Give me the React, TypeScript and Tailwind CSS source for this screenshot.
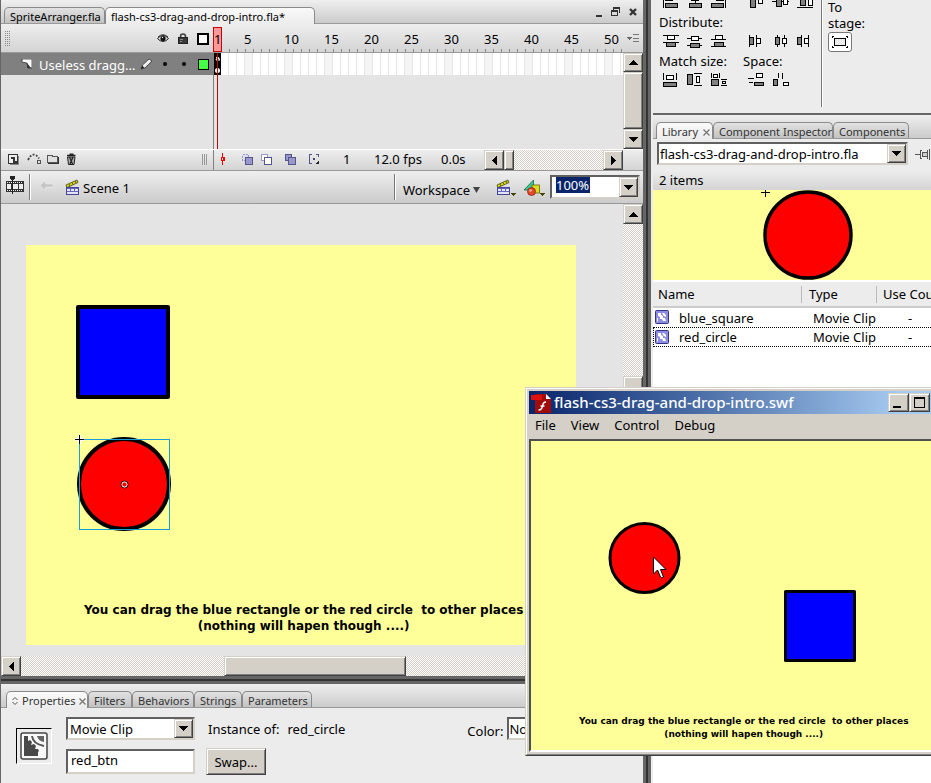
import type { ReactNode } from "react";
import { clsx } from "clsx";

const GRADIENT = "bg-linear-to-b from-[#efefef] to-[#cbcbcb]";
const BAR = "bg-linear-to-b from-[#eeeeee] to-[#d4d4d4]";
const DITHER =
  "bg-[repeating-conic-gradient(#ffffff_0_25%,#d4d0c8_0_50%)] bg-[length:2px_2px]";
const RAISED =
  "border border-t-[#d4d0c8] border-l-[#d4d0c8] border-r-[#404040] border-b-[#404040] bg-[#d4d0c8] shadow-[inset_1px_1px_#ffffff,inset_-1px_-1px_#808080]";
const SUNKEN =
  "border-2 border-t-[#606060] border-l-[#606060] border-r-[#d4d0c8] border-b-[#d4d0c8] bg-white";

type Direction = "up" | "down" | "left" | "right";

const ARROWS: Record<Direction, string> = {
  up: "M4 0h1v1h1v1h1v1h1v1h1v1H0V4h1V3h1V2h1V1h1z",
  down: "M0 0h9v1H8v1H7v1H6v1H5v1H4V4H3V3H2V2H1V1H0z",
  left: "M4 0h1v9H4V8H3V7H2V6H1V5H0V4h1V3h1V2h1V1h1z",
  right: "M0 0h1v1h1v1h1v1h1v1h1v1H4v1H3v1H2v1H1v1H0z",
};

function Glyph({
  w,
  h,
  children,
  smooth,
}: {
  w: number;
  h: number;
  children: ReactNode;
  smooth?: boolean;
}) {
  return (
    <svg
      width={w}
      height={h}
      viewBox={`0 0 ${w} ${h}`}
      fill="none"
      shapeRendering={smooth ? "auto" : "crispEdges"}
      className="shrink-0"
      aria-hidden="true"
    >
      {children}
    </svg>
  );
}

function ArrowButton({
  direction,
  label,
  className,
}: {
  direction: Direction;
  label: string;
  className?: string;
}) {
  const upright = direction === "up" || direction === "down";
  return (
    <button
      aria-label={label}
      className={clsx(
        "flex shrink-0 items-center justify-center",
        RAISED,
        className ?? "size-5",
      )}
    >
      <Glyph w={upright ? 9 : 5} h={upright ? 5 : 9}>
        <path d={ARROWS[direction]} fill="#000" />
      </Glyph>
    </button>
  );
}

function Tab({
  children,
  active,
  className,
}: {
  children: ReactNode;
  active?: boolean;
  className?: string;
}) {
  return (
    <button
      className={clsx(
        "flex shrink-0 items-center rounded-t-[5px] border border-b-0 border-[#8a8a8a] pt-[2px] text-[11px] leading-[14px] whitespace-nowrap",
        active
          ? "-mb-px h-[17px] bg-linear-to-b from-[#fafafa] to-[#ececec]"
          : "h-4 bg-linear-to-b from-[#e2e2e2] to-[#c2c2c2]",
        className,
      )}
    >
      {children}
    </button>
  );
}

function CloseMark() {
  return (
    <Glyph w={7} h={7} smooth>
      <path d="M0.5 0.5l6 6M6.5 0.5l-6 6" stroke="#777" strokeWidth="1.3" />
    </Glyph>
  );
}

/* ---------- document tabs ---------- */

function DocumentTabs() {
  return (
    <div
      className={clsx(
        "flex h-6 shrink-0 items-end border-b border-[#999] pl-[3px]",
        GRADIENT,
      )}
    >
      <Tab className="w-[101px] pl-[5px]">SpriteArranger.fla</Tab>
      <Tab active className="w-[210px] pl-[5px]">
        flash-cs3-drag-and-drop-intro.fla*
      </Tab>
      <div className="flex flex-1 items-center justify-end gap-[9px] self-stretch pr-[6px]">
        <button aria-label="Minimize document" className="pt-2">
          <Glyph w={6} h={2}>
            <path d="M0 0h6v2H0z" fill="#333" />
          </Glyph>
        </button>
        <button aria-label="Restore document">
          <Glyph w={9} h={9}>
            <path
              d="M2 0h7v6H8V2H3v1H2zM0 3h7v6H0zM1 5v3h5V5z"
              fill="#333"
              fillRule="evenodd"
            />
          </Glyph>
        </button>
        <button aria-label="Close document">
          <Glyph w={8} h={8} smooth>
            <path d="M1 1l6 6M7 1L1 7" stroke="#333" strokeWidth="2.4" />
          </Glyph>
        </button>
      </div>
    </div>
  );
}

/* ---------- timeline ---------- */

function EyeIcon() {
  return (
    <Glyph w={12} h={9} smooth>
      <path d="M0.5 4.5Q3 1.5 6 1.5T11.5 4.5Q9 7.5 6 7.5T0.5 4.5z" fill="#ddd" stroke="#222" />
      <circle cx="6" cy="4.5" r="2.6" fill="#111" />
      <path d="M1 3Q6 -1.5 11 3" stroke="#333" />
      <circle cx="5.5" cy="3.5" r="0.7" fill="#fff" />
    </Glyph>
  );
}

function LockIcon() {
  return (
    <Glyph w={10} h={11} smooth>
      <path d="M2.5 6V3.5a2.5 2.5 0 0 1 5 0V6" stroke="#444" strokeWidth="1.6" />
      <rect x="0.5" y="4.5" width="9" height="6" fill="#3a3a3a" stroke="#222" />
      <path d="M2 6.5h3M2 8.5h2" stroke="#888" />
    </Glyph>
  );
}

function PencilIcon() {
  return (
    <Glyph w={13} h={12} smooth>
      <path d="M1 11l1.5-4L9 1l3 2-7 7z" fill="#e8e8e8" stroke="#333" strokeWidth="0.8" />
      <path d="M1 11l1.3-3 2 1.6z" fill="#111" />
      <path d="M4 7.5L10 2" stroke="#fff" />
    </Glyph>
  );
}

function TimelineHeader() {
  const labels = Array.from({ length: 10 }, (_, i) => (i + 1) * 5);
  return (
    <div className={clsx("flex h-[29px] shrink-0 border-b border-[#999]", BAR)}>
      <div className="flex w-[212px] shrink-0 items-center pt-px pl-1">
        <Glyph w={5} h={16}>
          {[0, 2, 4].map((x) => (
            <path key={x} d={`M${x + 0.5} 0v16`} stroke="#888" strokeDasharray="1 1" />
          ))}
        </Glyph>
        <div className="ml-auto flex items-center gap-[9px] pr-1">
          <EyeIcon />
          <LockIcon />
          <Glyph w={12} h={12}>
            <rect x="1" y="1" width="10" height="10" fill="#fff" stroke="#000" strokeWidth="2" />
          </Glyph>
        </div>
      </div>
      <div className="flex min-w-0 flex-1 overflow-hidden">
        <div className="mt-[3px] h-[25px] w-[9px] shrink-0 border border-[#c00] bg-[#f99] pt-[3px] text-center text-[13px] leading-4">
          1
        </div>
        <div className="min-w-0 flex-1">
          <div className="flex h-[25px] pt-[7px] pl-[22px] text-[13px] leading-4">
            {labels.map((n) => (
              <span key={n} className="w-10 shrink-0">
                {n}
              </span>
            ))}
          </div>
          <div className="ml-[7px] h-[3px] w-[393px] bg-[repeating-linear-gradient(90deg,#888_0_1px,transparent_1px_8px)]" />
        </div>
      </div>
      <button aria-label="Frame view options" className="self-center pr-1">
        <Glyph w={12} h={9}>
          <path d="M0 3h5v1H4v1H3v1H2V5H1V4H0z" fill="#666" />
          <path d="M6 0.5h6M6 4.5h6M6 7.5h6" stroke="#777" />
        </Glyph>
      </button>
    </div>
  );
}

function TimelineBody() {
  const frames = Array.from({ length: 50 }, (_, i) => i + 2);
  return (
    <div className="flex h-24 shrink-0 bg-[#e4e4e4]">
      <div className="w-[213px] shrink-0 border-r border-[#808080]">
        <div className="flex h-[22px] items-center bg-[#808080] pl-5 text-white">
          <Glyph w={11} h={10} smooth>
            <path d="M1 0h10v9H7L6 4 1 3z" fill="#fff" stroke="#222" strokeWidth="0.7" />
            <path d="M6 4v5l4 0z" fill="#333" />
          </Glyph>
          <span className="w-[102px] pt-px pl-[7px] text-[13px] leading-4 whitespace-nowrap">
            Useless dragg...
          </span>
          <div className="ml-auto flex items-center pr-1">
            <PencilIcon />
            <span className="ml-[10px] size-1 rounded-full bg-black" />
            <span className="ml-[15px] size-1 rounded-full bg-black" />
            <span className="ml-3 size-[11px] border border-black bg-[#4f4]" />
          </div>
        </div>
      </div>
      <div className="relative min-w-0 flex-1 overflow-hidden">
        <div className="flex h-[22px] bg-white">
          <div className="w-[7px] shrink-0 bg-black">
            <Glyph w={7} h={22} smooth>
              <path d="M2 4.5Q5.5 3 5.5 7.5M5 5.5Q1.5 5 2 7h3" stroke="#fff" />
              <circle cx="3.5" cy="17.5" r="2.5" fill="#fff" />
            </Glyph>
          </div>
          {frames.map((f) => (
            <div
              key={f}
              className={clsx(
                "w-2 shrink-0 border-r border-[#e6e6e6]",
                f % 5 === 0 ? "bg-[#f4f4f4]" : "bg-white",
              )}
            />
          ))}
        </div>
        <div className="absolute inset-y-0 left-[3px] w-px bg-[#c00]" />
      </div>
      <div className={clsx("flex w-5 shrink-0 flex-col", DITHER)}>
        <ArrowButton direction="up" label="Scroll layers up" className="h-[19px] w-full" />
        <div className={clsx("flex-1", RAISED)} />
        <ArrowButton direction="down" label="Scroll layers down" className="h-5 w-full" />
      </div>
    </div>
  );
}

function TimelineFooter() {
  return (
    <div
      className={clsx(
        "flex h-[22px] shrink-0 border-t border-b border-t-white border-b-[#999]",
        BAR,
      )}
    >
      <div className="flex w-[213px] shrink-0 items-center gap-2 border-r border-[#808080] pb-[2px] pl-[7px]">
        <button aria-label="Insert layer">
          <Glyph w={11} h={11}>
            <rect x="0.5" y="0.5" width="9" height="9" fill="#eee" stroke="#333" />
            <path d="M3 3h4v4h2v2H5V5H3z" fill="#333" />
            <path d="M10.5 2v8.5H2" stroke="#888" />
          </Glyph>
        </button>
        <button aria-label="Add motion guide">
          <Glyph w={15} h={12} smooth>
            <path d="M1 7Q6 -3 12 5.5" stroke="#444" strokeWidth="1.8" strokeDasharray="2 1.5" />
            <rect x="10.5" y="7.5" width="3" height="3" stroke="#555" />
          </Glyph>
        </button>
        <button aria-label="Insert layer folder" className="-ml-[3px]">
          <Glyph w={12} h={10}>
            <path d="M0.5 1.5h5v1h5v6h-10z" fill="#e0e0e0" stroke="#555" />
            <path d="M11.5 3v6.5H1" stroke="#333" />
          </Glyph>
        </button>
        <button aria-label="Delete layer" className="-ml-px">
          <Glyph w={11} h={12} smooth>
            <path d="M1 2.5h8.5M3.5 1.2h4" stroke="#222" strokeWidth="1.6" />
            <path d="M1.5 4h7.5l-1 7.5H2.5z" fill="#aaa" stroke="#222" />
            <path d="M3.5 4l3 7M7 4l-3 7" stroke="#222" strokeWidth="1.2" />
          </Glyph>
        </button>
        <div className="ml-auto pr-[5px]">
          <Glyph w={6} h={11}>
            <path d="M0.5 0v11M2.5 0v11M4.5 0v11" stroke="#999" />
          </Glyph>
        </div>
      </div>
      <div className="flex flex-1 items-center pb-[2px] pl-[7px]">
        <button aria-label="Center frame">
          <Glyph w={4} h={12}>
            <path d="M1 0h1v4h2v4H2v4H1V8H0V4h1zM1 5v2h1V5z" fill="#e00" fillRule="evenodd" />
          </Glyph>
        </button>
        <button aria-label="Onion skin" className="ml-[17px]">
          <Glyph w={11} h={11}>
            <rect x="0.5" y="0.5" width="6" height="6" fill="#dde" stroke="#99c" strokeDasharray="2 1" />
            <rect x="3.5" y="3.5" width="7" height="7" fill="#9898cc" stroke="#558" />
          </Glyph>
        </button>
        <button aria-label="Onion skin outlines" className="ml-2">
          <Glyph w={11} h={11}>
            <rect x="0.5" y="0.5" width="6" height="6" fill="#fff" stroke="#99c" />
            <rect x="3.5" y="3.5" width="7" height="7" fill="#fff" stroke="#558" />
          </Glyph>
        </button>
        <button aria-label="Edit multiple frames" className="ml-[13px]">
          <Glyph w={11} h={11}>
            <rect x="0.5" y="0.5" width="6" height="6" fill="#9898cc" stroke="#558" />
            <rect x="3.5" y="3.5" width="7" height="7" fill="#9898cc" stroke="#558" />
          </Glyph>
        </button>
        <button aria-label="Modify onion markers" className="ml-[13px]">
          <Glyph w={11} h={11}>
            <path d="M3 0.5H0.5v9H3M7 0.5h2.5V3" stroke="#558" strokeWidth="1" />
            <path d="M4 4h2v2H4z" fill="#447" />
            <path d="M9 7h1v3H7V9h1V8h1z" fill="#222" />
          </Glyph>
        </button>
        <span className="ml-[23px] w-[31px] text-[13px] leading-4">1</span>
        <span className="w-[67px] text-[13px] leading-4">12.0 fps</span>
        <span className="text-[13px] leading-4">0.0s</span>
      </div>
      <div className={clsx("mr-5 flex w-[139px] shrink-0", DITHER)}>
        <ArrowButton direction="left" label="Scroll frames left" />
        <div className={clsx("w-[10px]", RAISED)} />
        <ArrowButton direction="right" label="Scroll frames right" className="ml-auto size-5" />
      </div>
    </div>
  );
}

/* ---------- scene bar ---------- */

function Clapper() {
  return (
    <Glyph w={15} h={17} smooth>
      <path d="M1 6L12 1l1 2.5L2 8.500z" fill="#dd0" stroke="#552" strokeWidth="0.9" />
      <path d="M4 5l1 2M7 3.5l1 2M10 2l1 2" stroke="#552" />
      <rect x="1.5" y="8.5" width="12" height="7" fill="#e4e4ff" stroke="#449" />
      <path d="M2 9.5h11M2 12.5h11M5.5 10v2M9.5 10v2" stroke="#66b" />
    </Glyph>
  );
}

function MenuTick() {
  return (
    <Glyph w={5} h={3}>
      <path d="M0 0h5v1H4v1H3v1H2V2H1V1H0z" fill="#440" />
    </Glyph>
  );
}

function SceneBar() {
  return (
    <div className={clsx("flex h-[33px] shrink-0 items-center border-b border-[#999] pl-[5px]", GRADIENT)}>
      <button aria-label="Hide timeline" className="pb-1">
        <Glyph w={18} h={18}>
          <rect x="0" y="5" width="18" height="11" fill="#333" />
          <path d="M1 6.5h16M1 14.5h16" stroke="#eee" strokeDasharray="1 1" />
          <path d="M1 8h4v5H1zM6 8h6v5H6zM13 8h4v5h-4z" fill="#eee" />
          <path d="M4 0h5v3H8v1H5V3H4zM6 3h1v15H6z" fill="#222" />
        </Glyph>
      </button>
      <div className="mr-2 ml-[5px] h-[26px] w-[2px] border-l border-l-[#777] bg-white" />
      <button aria-label="Back" className="pb-1">
        <Glyph w={15} h={11} smooth>
          <path d="M1 5.5l5.500-5V4H14v3H6.500v3.500z" fill="#c4c4c4" stroke="#f0f0f0" strokeWidth="0.5" />
        </Glyph>
      </button>
      <div className="ml-[11px] flex items-center gap-[3px]">
        <Clapper />
        <span className="pt-px text-[13px] leading-5">Scene 1</span>
      </div>
      <div className="ml-auto h-[26px] w-[2px] border-l border-l-[#777] bg-white" />
      <button className="ml-[7px] flex items-center gap-[3px] pt-[5px] text-[13px] leading-5">
        Workspace
        <svg width="7" height="6" viewBox="0 0 7 6" aria-hidden="true">
          <path d="M0 0h7L3.5 6z" fill="#444" />
        </svg>
      </button>
      <button aria-label="Edit scene" className="ml-4 flex items-end">
        <Clapper />
        <MenuTick />
      </button>
      <button aria-label="Edit symbols" className="ml-[7px] flex items-end">
        <Glyph w={17} h={17} smooth>
          <path d="M1 11L10.5 1v10z" fill="#3c9" stroke="#164" strokeWidth="0.8" />
          <rect x="9" y="6" width="7.5" height="8" fill="#dd2" stroke="#660" strokeWidth="0.8" />
          <circle cx="8.5" cy="12.5" r="4" fill="#e64a22" stroke="#822" strokeWidth="0.8" />
          <circle cx="7.5" cy="11.5" r="1.2" fill="#fba" />
        </Glyph>
        <MenuTick />
      </button>
      <div className={clsx("mr-[3px] ml-[5px] flex h-6 w-[90px] shrink-0", SUNKEN)}>
        <div className="flex-1 pl-1">
          <input
            aria-label="Zoom"
            defaultValue="100%"
            className="block h-4 w-[34px] bg-[#0a246a] text-[13px] leading-4 text-white outline-none"
          />
        </div>
        <ArrowButton direction="down" label="Zoom levels" className="h-5 w-[19px]" />
      </div>
    </div>
  );
}

/* ---------- stage ---------- */

function Caption({ className }: { className: string }) {
  return (
    <p className={clsx("text-center font-['DejaVu_Sans',sans-serif] font-bold whitespace-pre", className)}>
      {"You can drag the blue rectangle or the red circle  to other places\n(nothing will hapen though ....)"}
    </p>
  );
}

function Stage() {
  return (
    <div className="flex min-h-0 flex-1 flex-col">
      <div className="flex min-h-0 flex-1">
        <div className="relative min-w-0 flex-1 overflow-hidden bg-[#e4e4e4]">
          <div className="absolute top-[41px] left-[25px] h-[400px] w-[550px] bg-[#ff9]">
            <svg width="550" height="340" viewBox="0 0 550 340" fill="none" className="block">
              <rect x="52" y="62" width="90" height="90" fill="#00f" stroke="#000" strokeWidth="4" strokeLinejoin="round" />
              <circle cx="98" cy="239" r="45" fill="#f00" stroke="#000" strokeWidth="4" />
              <rect x="53.5" y="194.5" width="90" height="90" stroke="#1a9fd8" />
              <path d="M49 194.5h9M53.5 190v9" stroke="#fff" strokeWidth="3" />
              <path d="M49 194.5h9M53.5 190v9" stroke="#000" />
              <circle cx="98.5" cy="239.5" r="3.5" stroke="#000" />
              <circle cx="98.5" cy="239.5" r="2.6" stroke="#fff" />
            </svg>
            <Caption className="absolute top-[357px] left-[58px] text-xs leading-4" />
          </div>
        </div>
        <div className={clsx("flex w-5 shrink-0 flex-col", DITHER)}>
          <ArrowButton direction="up" label="Scroll stage up" />
          <div className={clsx("mt-[152px] h-44", RAISED)} />
          <ArrowButton direction="down" label="Scroll stage down" className="mt-auto size-5" />
        </div>
      </div>
      <div className={clsx("mr-5 flex h-5 shrink-0", DITHER)}>
        <ArrowButton direction="left" label="Scroll stage left" />
        <div className={clsx("ml-[203px] w-[182px]", RAISED)} />
        <ArrowButton direction="right" label="Scroll stage right" className="ml-auto size-5" />
      </div>
    </div>
  );
}

/* ---------- properties ---------- */

function Properties() {
  return (
    <section className="h-[99px] shrink-0 bg-[#ececec]">
      <div className={clsx("flex h-6 items-end border-b border-[#999] pl-[5px] text-[#333]", GRADIENT)}>
        <Tab active className="w-[82px] gap-1 pl-[5px]">
          <Glyph w={6} h={8} smooth>
            <path d="M0.5 3L3 0.5 5.5 3M0.5 5L3 7.5 5.5 5" stroke="#555" />
          </Glyph>
          Properties
          <CloseMark />
        </Tab>
        <Tab className="w-11 pl-[5px]">Filters</Tab>
        <Tab className="w-[62px] pl-[5px]">Behaviors</Tab>
        <Tab className="w-12 pl-[5px]">Strings</Tab>
        <Tab className="w-[70px] pl-[5px]">Parameters</Tab>
      </div>
      <div className="flex pt-[9px] pl-[15px] text-[13px] leading-4">
        <div className="mt-[11px] flex size-9 shrink-0 items-center justify-center border border-t-black border-l-black border-r-white border-b-white">
          <Glyph w={28} h={28} smooth>
            <rect x="1" y="1" width="26" height="26" rx="2" fill="#f8f8f8" stroke="#444" strokeWidth="1.5" />
            <path d="M4 4h4v5l2-1 2 2-1 3 3-1 2 2-1 3 3 0 1 2-1 1v4H4z" fill="#484848" />
            <path d="M12 4q1 8 12 10" stroke="#555" strokeWidth="2" />
            <path d="M17 4q1 5 7 6V4z" fill="#666" />
          </Glyph>
        </div>
        <div className="ml-[14px] flex w-[129px] shrink-0 flex-col gap-[9px]">
          <div className={clsx("flex h-[23px]", SUNKEN)}>
            <select
              aria-label="Instance behavior"
              className="min-w-0 flex-1 appearance-none pl-[2px] outline-none"
            >
              <option>Movie Clip</option>
            </select>
            <ArrowButton direction="down" label="Open behaviors" className="h-full w-[19px]" />
          </div>
          <input
            aria-label="Instance name"
            defaultValue="red_btn"
            className={clsx("h-[25px] pb-1 pl-[3px] outline-none", SUNKEN)}
          />
        </div>
        <div className="ml-[11px] flex flex-col items-start">
          <p className="flex gap-2 pt-1 pl-[2px] whitespace-nowrap">
            <span>Instance of:</span>
            <span>red_circle</span>
          </p>
          <button className={clsx("mt-[11px] h-[27px] w-[60px]", RAISED)}>Swap...</button>
        </div>
        <div className="ml-[122px] flex items-start gap-1">
          <label htmlFor="color-effect" className="pt-[6px]">
            Color:
          </label>
          <select
            id="color-effect"
            className={clsx("h-[23px] w-24 appearance-none outline-none", SUNKEN)}
          >
            <option>None</option>
          </select>
        </div>
      </div>
    </section>
  );
}

/* ---------- align panel ---------- */

// Boxes are [x, y, width, height, shaded]; lines are plain path data.
type Box = [number, number, number, number, 0 | 1];

function AlignButton({ label, boxes, lines }: { label: string; boxes: Box[]; lines?: string }) {
  return (
    <button aria-label={label} className="shrink-0">
      <Glyph w={17} h={14}>
        {lines && <path d={lines} stroke="#000" />}
        {boxes.map(([x, y, w, h, shade], i) => (
          <rect
            key={i}
            x={x + 0.5}
            y={y + 0.5}
            width={w - 1}
            height={h - 1}
            fill={shade ? "#808080" : "#fff"}
            stroke="#000"
          />
        ))}
      </Glyph>
    </button>
  );
}

function AlignPanel() {
  return (
    <section className="flex h-[113px] shrink-0 bg-[#ececec] text-[13px] leading-4">
      <div className="-mt-[6px] w-[168px] shrink-0 pl-[6px]">
        <div className="flex items-center gap-[7px] pl-[3px]">
          <AlignButton label="Align left edge" boxes={[[3, 2, 8, 5, 0], [3, 9, 13, 5, 1]]} lines="M1.5 0v14" />
          <AlignButton label="Align horizontal center" boxes={[[5, 2, 8, 5, 0], [3, 9, 13, 5, 1]]} lines="M9.5 0v14" />
          <AlignButton label="Align right edge" boxes={[[6, 2, 8, 5, 0], [1, 9, 13, 5, 1]]} lines="M15.5 0v14" />
          <span className="w-[7px]" />
          <AlignButton label="Align top edge" boxes={[[2, 2, 6, 12, 1], [10, 2, 5, 8, 0]]} lines="M0 0.5h17" />
          <AlignButton label="Align vertical center" boxes={[[4, 1, 6, 12, 1], [11, 4, 5, 7, 0]]} lines="M0 7.5h17" />
          <AlignButton label="Align bottom edge" boxes={[[4, 0, 6, 12, 1], [12, 5, 5, 7, 0]]} lines="M1 13.5h16" />
        </div>
        <h2 className="mt-[6px]">Distribute:</h2>
        <div className="mt-1 flex items-center gap-[7px] pl-[3px]">
          <AlignButton label="Distribute top edge" boxes={[[5, 1, 8, 5, 0], [4, 8, 10, 5, 1]]} lines="M1 1.5h16M1 8.5h16" />
          <AlignButton label="Distribute vertical center" boxes={[[5, 2, 8, 5, 0], [4, 9, 10, 5, 1]]} lines="M1 4.5h15M1 11.5h15" />
          <AlignButton label="Distribute bottom edge" boxes={[[5, 1, 8, 5, 0], [4, 8, 10, 5, 1]]} lines="M1 5.5h15M1 12.5h15" />
          <span className="w-[7px]" />
          <AlignButton label="Distribute left edge" boxes={[[1, 3, 5, 8, 1], [8, 4, 5, 6, 0]]} lines="M1.5 1v12M8.5 1v12" />
          <AlignButton label="Distribute horizontal center" boxes={[[3, 3, 5, 8, 1], [10, 4, 5, 6, 0]]} lines="M5.5 1v12M12.5 1v12" />
          <AlignButton label="Distribute right edge" boxes={[[1, 3, 5, 8, 1], [8, 4, 5, 6, 0]]} lines="M5.5 1v12M12.5 1v12" />
        </div>
        <div className="mt-[5px] flex">
          <h2 className="w-[84px]">Match size:</h2>
          <h2>Space:</h2>
        </div>
        <div className="mt-1 flex items-center gap-[7px] pl-[3px]">
          <AlignButton label="Match width" boxes={[[4, 2, 8, 5, 0], [1, 9, 14, 5, 1]]} lines="M1.5 0v7M14.5 0v7" />
          <AlignButton label="Match height" boxes={[[1, 1, 6, 11, 1], [10, 3, 4, 7, 0]]} lines="M8 0.5h8M8 12.5h8" />
          <AlignButton label="Match width and height" boxes={[[3, 1, 5, 4, 0], [1, 6, 8, 7, 1], [12, 8, 4, 3, 0]]} lines="M1.5 0v5M9.5 0v5M11 6.5h6M11 12.5h6" />
          <span className="w-[7px]" />
          <AlignButton label="Space evenly vertically" boxes={[[8, 0, 7, 5, 0], [6, 9, 10, 4, 1]]} lines="M0 5.5h6M1 9.5h4" />
          <AlignButton label="Space evenly horizontally" boxes={[[1, 6, 5, 7, 1], [11, 9, 6, 4, 0]]} lines="M6.5 0v5M10.5 0v6" />
        </div>
      </div>
      <div className="h-[107px] w-[2px] shrink-0 border-l border-l-[#777] bg-white" />
      <div className="-mt-px w-12 pl-[5px]">
        <h2>To stage:</h2>
        <button
          aria-label="Align to stage"
          className="mt-px flex h-5 w-6 items-center justify-center rounded-[3px] border border-[#777] bg-white"
        >
          <Glyph w={16} h={12}>
            <rect x="2.5" y="2.5" width="11" height="7" fill="#ececec" stroke="#000" />
            <path d="M0 0h2v1H1v1H0zM14 0h2v2h-1V1h-1zM0 12h2v-1H1v-1H0zM16 12h-2v-1h1v-1h1z" fill="#000" />
          </Glyph>
        </button>
      </div>
    </section>
  );
}

/* ---------- library ---------- */

function ClipIcon() {
  return (
    <Glyph w={15} h={15} smooth>
      <rect x="0.5" y="0.5" width="13" height="13" rx="1" fill="#8c8ce0" stroke="#338" />
      <path d="M3 3h3v2l2 1 0 2 2 0 1 3H8L7 9 5 9 5 7 3 6z" fill="#fff" />
      <path d="M7 3q1 3 4 4V5L9 3z" fill="#fff" />
      <path d="M2.5 11.5V8" stroke="#fff" />
    </Glyph>
  );
}

const ITEMS = [
  { name: "blue_square", type: "Movie Clip", uses: "-" },
  { name: "red_circle", type: "Movie Clip", uses: "-", focused: true },
];

function Library() {
  return (
    <section className="flex min-h-0 flex-1 flex-col border-t-2 border-[#666] bg-white">
      <div className={clsx("flex h-6 shrink-0 items-end border-b border-[#999] pl-[3px] text-[#333]", GRADIENT)}>
        <Tab active className="w-[57px] gap-[5px] pl-[5px]">
          Library
          <CloseMark />
        </Tab>
        <Tab className="w-[120px] pl-[5px]">Component Inspector</Tab>
        <Tab className="w-[76px] pl-[5px]">Components</Tab>
      </div>
      <div className="flex h-[31px] shrink-0 items-start bg-[#ececec] pt-[3px] pl-1">
        <div className={clsx("flex h-[23px] w-[251px] shrink-0", SUNKEN)}>
          <select
            aria-label="Library document"
            className="min-w-0 flex-1 appearance-none pl-px text-[13px] leading-4 outline-none"
          >
            <option>flash-cs3-drag-and-drop-intro.fla</option>
          </select>
          <ArrowButton direction="down" label="Open document list" className="h-full w-[19px]" />
        </div>
        <button aria-label="Pin library" className="mt-[7px] ml-[7px]">
          <Glyph w={15} h={12}>
            <path d="M0 5.5h5M5.5 1v9M7.5 3v5M7 3.5h5M7 7.5h5M12.5 1v9M14.5 0v11M5 1.5h2M5 9.5h2" stroke="#555" />
            <path d="M8 4h4v3H8z" fill="#ccc" />
          </Glyph>
        </button>
      </div>
      <div className={clsx("h-5 shrink-0 pt-[2px] pl-[6px] text-[13px] leading-4", BAR)}>2 items</div>
      <div className="h-[90px] shrink-0 overflow-hidden bg-[#ff9]">
        <svg width="278" height="90" viewBox="0 0 278 90" fill="none">
          <circle cx="155" cy="45" r="43" fill="#f00" stroke="#000" strokeWidth="3.5" />
          <path d="M108 2.5h9M112.5 -1v8" stroke="#000" />
        </svg>
      </div>
      <table className="w-[300px] shrink-0 table-fixed border-collapse text-[13px] leading-4">
        <thead className="border-t-2 border-b-2 border-t-white border-b-[#ccc] bg-[#ececec]">
          <tr className="h-[26px] text-left">
            <th className="w-[149px] pl-[5px] font-normal">
              <span className="flex h-[17px] items-center border-r border-[#bbb]">Name</span>
            </th>
            <th className="w-[75px] pl-[7px] font-normal">
              <span className="flex h-[17px] items-center border-r border-[#bbb]">Type</span>
            </th>
            <th className="pl-[6px] font-normal whitespace-nowrap">Use Count</th>
          </tr>
        </thead>
        <tbody>
          {ITEMS.map((item) => (
            <tr
              key={item.name}
              className={clsx("h-5", item.focused && "outline-1 -outline-offset-1 outline-black outline-dotted")}
            >
              <td className="pl-[2px]">
                <span className="flex items-center gap-[9px]">
                  <ClipIcon />
                  {item.name}
                </span>
              </td>
              <td className="pl-[11px] whitespace-nowrap">{item.type}</td>
              <td className="pl-[31px]">{item.uses}</td>
            </tr>
          ))}
        </tbody>
      </table>
    </section>
  );
}

/* ---------- player window ---------- */

function PlayerWindow() {
  return (
    <div className="absolute top-[387px] -right-6 left-[525px] border border-[#d4d0c8] border-b-[#404040] bg-[#d4d0c8]">
      <div className="border border-t-white border-l-white border-b-[#808080] p-[2px]">
        <div className="flex h-[23px] items-center bg-linear-to-r from-[#0a246a] to-[#a6caf0] to-[88%] pl-[2px]">
          <Glyph w={20} h={20} smooth>
            <path d="M4 1h11l5 5v14H4z" fill="#a00c0c" />
            <path d="M15 1l5 5h-5z" fill="#fff" />
            <path d="M0 2h11v5H0z" fill="#e01010" />
            <path d="M15 9q-3 0-3.5 4t-4 4M9.5 13h4" stroke="#fff" strokeWidth="1.6" />
          </Glyph>
          <span className="pb-px pl-[3px] text-[15px] leading-5 font-medium text-white">
            flash-cs3-drag-and-drop-intro.swf
          </span>
          <div className="ml-auto flex">
            <button aria-label="Minimize" className={clsx("flex h-[19px] w-[21px] items-end pb-[3px] pl-1", RAISED)}>
              <Glyph w={8} h={2}>
                <path d="M0 0h8v2H0z" fill="#000" />
              </Glyph>
            </button>
            <button aria-label="Maximize" className={clsx("flex h-[19px] w-[21px] items-center justify-center", RAISED)}>
              <Glyph w={11} h={11}>
                <path d="M0 0h11v11H0zM1 2v8h9V2z" fill="#000" fillRule="evenodd" />
              </Glyph>
            </button>
            <button aria-label="Close" className={clsx("ml-[2px] h-[19px] w-[19px]", RAISED)} />
          </div>
        </div>
        <nav className="flex h-[25px] items-start gap-[15px] pt-[3px] pl-[6px] text-[13px] leading-4">
          <button>File</button>
          <button>View</button>
          <button>Control</button>
          <button>Debug</button>
        </nav>
        <div className="border-2 border-t-[#505050] border-l-[#505050] border-b-white bg-[#ff9]">
          <div className="relative h-[309px] overflow-hidden">
            <svg width="400" height="240" viewBox="0 0 400 240" fill="none">
              <circle cx="113.5" cy="117" r="34.5" fill="#f00" stroke="#000" strokeWidth="3" />
              <rect x="254.5" y="150.5" width="69" height="69" fill="#00f" stroke="#000" strokeWidth="3" strokeLinejoin="round" />
              <path d="M122.5 116v17l4-4 3 7q1 1.500 3 0l-3-7.500h5.500z" fill="#fff" stroke="#000" />
            </svg>
            <Caption className="absolute top-[274px] left-12 text-[9px] leading-[13px]" />
          </div>
        </div>
      </div>
    </div>
  );
}

export default function App() {
  return (
    <main className="relative flex h-screen overflow-hidden bg-[#ececec] font-['Noto_Sans',sans-serif] text-black">
      <div className="flex min-w-0 flex-1 flex-col border-l border-[#666]">
        <DocumentTabs />
        <TimelineHeader />
        <TimelineBody />
        <TimelineFooter />
        <SceneBar />
        <Stage />
        <div className="h-2 shrink-0 border-y-3 border-[#666] bg-[#333]" />
        <Properties />
      </div>
      <div className="w-2 shrink-0 border-x-3 border-[#666] bg-[#333]" />
      <div className="flex w-70 shrink-0 flex-col overflow-hidden border-l-2 border-[#ececec]">
        <AlignPanel />
        <Library />
      </div>
      <PlayerWindow />
    </main>
  );
}
